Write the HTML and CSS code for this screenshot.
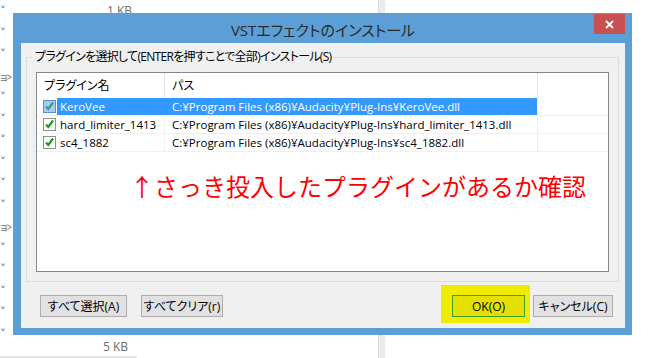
FILE: index.html
```html
<!DOCTYPE html>
<html lang="ja">
<head>
  <meta charset="UTF-8" />
  <title>VSTエフェクトのインストール</title>
  <link rel="stylesheet" href="styles.css">
</head>
<body>
  <!-- things behind the dialog -->
  <div class="bg-tree">
    <span>ˇ</span><span>ˇ</span><span>ˇ</span><span class="tail">ョ&gt;</span>
    <span>ˇ</span><span>ˇ</span><span>ˇ</span><span>ˇ</span>
    <span>ˇ</span><span>ˇ</span><span class="tail">ョ&gt;</span><span>ˇ</span>
    <span>ˇ</span><span>ˇ</span><span>ˇ</span><span>ˇ</span>
  </div>
  <div class="bg-size bg-size-top">1 KB</div>
  <div class="bg-size bg-size-bottom">5 KB</div>
  <div class="bg-scroll"></div>
  <div class="bg-rule"></div>

  <div class="window">
    <div class="titlebar">
      <div class="title">VSTエフェクトのインストール</div>
      <div class="close">
        <svg width="9" height="9" viewBox="0 0 9 9"><path d="M1 1 L8 8 M8 1 L1 8" stroke="#fff" stroke-width="1.8"/></svg>
      </div>
    </div>

    <div class="client">
      <fieldset class="group">
        <legend>プラグインを選択して(ENTERを押すことで全部)インストール(S)</legend>
        <div class="list">
          <div class="row head">
            <div class="cell">プラグイン名</div>
            <div class="cell">パス</div>
            <div class="cell"></div>
          </div>
          <div class="row selected">
            <div class="cell name">
              <span class="check"><svg width="11" height="11" viewBox="0 0 11 11"><path d="M2 5.5 L4.3 8 L9 1.5" fill="none" stroke-width="2.3"/></svg></span>
              <span class="label">KeroVee</span>
            </div>
            <div class="cell path">C:¥Program Files (x86)¥Audacity¥Plug-Ins¥KeroVee.dll</div>
            <div class="cell"></div>
          </div>
          <div class="row">
            <div class="cell name">
              <span class="check"><svg width="11" height="11" viewBox="0 0 11 11"><path d="M2 5.5 L4.3 8 L9 1.5" fill="none" stroke-width="2.3"/></svg></span>
              <span class="label">hard_limiter_1413</span>
            </div>
            <div class="cell path">C:¥Program Files (x86)¥Audacity¥Plug-Ins¥hard_limiter_1413.dll</div>
            <div class="cell"></div>
          </div>
          <div class="row">
            <div class="cell name">
              <span class="check"><svg width="11" height="11" viewBox="0 0 11 11"><path d="M2 5.5 L4.3 8 L9 1.5" fill="none" stroke-width="2.3"/></svg></span>
              <span class="label">sc4_1882</span>
            </div>
            <div class="cell path">C:¥Program Files (x86)¥Audacity¥Plug-Ins¥sc4_1882.dll</div>
            <div class="cell"></div>
          </div>

          <div class="note">↑さっき投入したプラグインがあるか確認</div>
        </div>
      </fieldset>

      <div class="actions">
        <div class="btn-group">
          <button class="btn btn-all">すべて選択(A)</button>
          <button class="btn btn-clear">すべてクリア(r)</button>
        </div>
        <div class="btn-group btn-group-right">
          <span class="marker"><button class="btn btn-ok">OK(O)</button></span>
          <button class="btn btn-cancel">キャンセル(C)</button>
        </div>
      </div>
    </div>
  </div>
</body>
</html>
```

FILE: styles.css
```css
* {
  margin: 0;
  padding: 0;
  box-sizing: border-box;
}
body {
  position: relative;
  width: 651px;
  height: 358px;
  overflow: hidden;
  background: #fff;
  font-family: "Open Sans", "Noto Sans CJK JP", sans-serif;
  font-feature-settings: "palt" 1;
  font-size: 11.5px;
  color: #000;
}

/* desktop behind the dialog */
.bg-tree {
  position: absolute;
  left: 0;
  top: 2px;
  display: flex;
  flex-direction: column;
  font-family: "DejaVu Sans", "Noto Sans CJK JP", sans-serif;
  color: #6f6f6f;
  font-size: 12px;
  line-height: 21.5px;
  white-space: nowrap;
}
.bg-tree .tail {
  font-family: "Open Sans", "Noto Sans CJK JP", sans-serif;
  font-size: 10px;
  letter-spacing: -1px;
}
.bg-size {
  position: absolute;
  color: #6d6d6d;
  font-size: 12px;
  line-height: 14px;
}
.bg-size-top {
  left: 107px;
  top: 4px;
}
.bg-size-bottom {
  left: 103px;
  top: 340px;
}
.bg-scroll {
  position: absolute;
  left: 378px;
  top: 0;
  width: 7px;
  height: 358px;
  background: #ececec;
  border-left: 1px solid #dcdcdc;
}
.bg-rule {
  position: absolute;
  left: 0;
  top: 356px;
  width: 137px;
  height: 2px;
  background: #e3e3e3;
}

/* dialog window */
.window {
  position: absolute;
  left: 13px;
  top: 13px;
  width: 619px;
  height: 322px;
  display: flex;
  flex-direction: column;
  padding: 0 7px 7px 8px;
  background: #5c9ed6;
}
.titlebar {
  height: 30px;
  display: grid;
  grid-template-columns: 1fr auto 1fr;
}
.title {
  grid-column: 2;
  padding-top: 4px;
  font-size: 15px;
  line-height: 26px;
  color: #2b2b2b;
  white-space: nowrap;
}
.close {
  grid-column: 3;
  justify-self: end;
  width: 31px;
  height: 20px;
  margin-top: 1px;
  display: flex;
  align-items: center;
  justify-content: center;
  background: #c75050;
}
.client {
  flex: 1;
  display: flex;
  flex-direction: column;
  background: #f0f0f0;
}

.group {
  min-width: 0;
  margin: 6px 6px 0 5px;
  padding: 7px 9px 9px;
  border: 1px solid #dcdcdc;
}
.group legend {
  margin-left: -3px;
  padding: 0 2px;
  font-size: 12px;
  line-height: 16px;
  letter-spacing: -0.7px;
}

/* list view */
.list {
  position: relative;
  height: 200px;
  border: 1px solid #828790;
  background: #fff;
}
.row {
  display: grid;
  grid-template-columns: 128px 373px 1fr;
  height: 18px;
  border-bottom: 1px solid #f0f0f0;
  line-height: 17px;
  white-space: nowrap;
}
.row.head {
  height: 25px;
  line-height: 25px;
  border-bottom: none;
  font-size: 12px;
}
.cell {
  overflow: hidden;
  padding-left: 7px;
  border-right: 1px solid #f0f0f0;
}
.cell:last-child {
  border-right: none;
}
.head .cell {
  border-right-color: #e5e5e5;
}
.cell.name {
  display: flex;
  align-items: center;
  padding-left: 6px;
}
.check {
  flex: none;
  width: 13px;
  height: 13px;
  margin-top: -1px;
  display: flex;
  align-items: center;
  justify-content: center;
  border: 1px solid #8f8f8f;
  background: #fff;
}
.check svg path {
  stroke: #1e9e1e;
}
.label {
  flex: 1;
  align-self: stretch;
  padding-left: 3px;
  margin-left: 1px;
}
.selected .label,
.selected .path {
  background: #3399ff;
  color: #fff;
}
.selected .name {
  border-right-color: #3399ff;
}
.selected .check {
  border-color: #5b8fd0;
  background: #a9cdf2;
}
.selected .check svg path {
  stroke: #3a9c86;
}

.note {
  position: absolute;
  left: 93px;
  top: 99px;
  font-family: "Noto Sans CJK JP", sans-serif;
  font-feature-settings: normal;
  font-size: 24px;
  line-height: 28px;
  color: #ff0000;
  white-space: nowrap;
}

/* buttons */
.actions {
  display: flex;
  justify-content: space-between;
  margin: 13px 12px 11px 19px;
}
.btn-group {
  display: flex;
  align-items: flex-start;
  gap: 14px;
}
.btn-group-right {
  gap: 8px;
}
.btn {
  height: 22px;
  border: 1px solid #adadad;
  background: #e1e1e1;
  font-family: inherit;
  font-feature-settings: "palt" 1;
  font-size: 12px;
  color: #000;
}
.btn-all { width: 87px; }
.btn-clear { width: 82px; }
.btn-ok {
  width: 73px;
  display: block;
  background: #e3df00;
  border-color: #3f9f27;
}
.btn-cancel { width: 80px; }
.marker {
  display: block;
  padding: 10px 5px 6px 11px;
  margin: -10px -5px -6px -11px;
  background: #f0ec00;
}
```
